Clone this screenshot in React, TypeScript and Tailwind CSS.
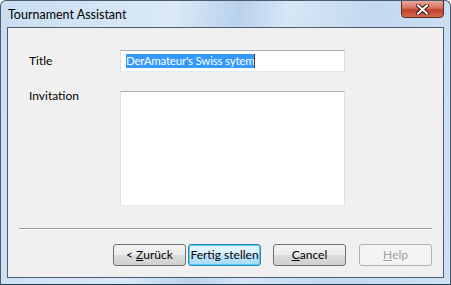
import { useState } from "react"

function VistaButton({
  children,
  isDefault = false,
  disabled = false,
  className = "",
}: {
  children: React.ReactNode
  isDefault?: boolean
  disabled?: boolean
  className?: string
}) {
  let look =
    "border-[#707070] text-black bg-[linear-gradient(to_bottom,#f2f2f2_0%,#ebebeb_48%,#dddddd_52%,#cfcfcf_100%)]"
  if (isDefault)
    look =
      "border-[#3c7fb1] text-black bg-[linear-gradient(to_bottom,#eaf6fd_0%,#d9f0fc_48%,#bee6fd_52%,#a7d9f5_100%)] shadow-[inset_0_0_0_1px_#48d3fc]"
  if (disabled) look = "border-[#adb2b5] text-[#a0a0a0] bg-[#f4f4f4]"
  return (
    <button
      disabled={disabled}
      className={`h-[22px] w-[73px] shrink-0 whitespace-nowrap rounded-[3px] border text-[12px] leading-none flex items-center justify-center ${look} ${className}`}
    >
      {children}
    </button>
  )
}

export default function App() {
  const [title] = useState("DerAmateur's Swiss sytem")

  return (
    <div
      className="w-[451px] h-[285px] overflow-hidden rounded-t-[6px] border border-[#4a5b6c] border-b-[#1c3b4d] bg-[linear-gradient(100deg,#c9def3_0%,#dbe9f7_35%,#b9d2ec_48%,#d6e6f6_58%,#c3d9f0_75%,#cfe1f4_100%)] flex flex-col"
      style={{ fontFamily: 'Lato, "Open Sans", sans-serif' }}
    >
      {/* title bar */}
      <div className="h-[26px] flex items-start justify-between pl-[7px] pr-[6px]">
        <span className="mt-[5px] text-[12.5px] text-black">Tournament Assistant</span>
        <div className="relative -mt-px w-[43px] h-[18px] rounded-b-[4px] border border-[#5a2a22] bg-[linear-gradient(to_bottom,#e9a99c_0%,#d7705e_45%,#c0412c_55%,#d36b4f_100%)] flex items-center justify-center">
          <svg width="13" height="11" viewBox="0 0 13 11">
            <path
              d="M2 1.5 L11 9.5 M11 1.5 L2 9.5"
              stroke="#3b1a14"
              strokeWidth="4"
              strokeLinecap="square"
            />
            <path
              d="M2 1.5 L11 9.5 M11 1.5 L2 9.5"
              stroke="#ffffff"
              strokeWidth="2"
              strokeLinecap="square"
            />
          </svg>
        </div>
      </div>

      {/* client area */}
      <div className="mx-[6px] mb-[6px] flex-1 border border-[#4d5c6b] bg-[#f0f0f0] flex flex-col text-[12px] text-black">
        <div className="grid grid-cols-[91px_225px] gap-y-[19px] pl-[21px] pt-[22px]">
          <span className="self-center">Title</span>
          <div className="h-[22px] border border-[#abadb3] border-x-[#dbdfe6] border-b-[#e3e9ef] bg-white flex items-center px-[5px]">
            <span className="bg-[#3399ff] text-white text-[11.5px] tracking-[-0.2px] leading-[14px]">{title}</span>
            <span className="w-px h-[14px] bg-[#5a3a2a]" />
          </div>
          <span className="-mt-[2px] leading-[14px]">Invitation</span>
          <div className="h-[115px] border border-[#adadad] border-x-[#dbdfe6] border-b-[#e3e9ef] bg-white" />
        </div>

        <div className="mt-auto mx-[11px] border-t border-[#a0a0a0] border-b border-b-white" />

        <div className="flex justify-end pr-[11px] pt-[14px] pb-[11px]">
          <VistaButton>
            &lt; <span className="underline ml-[3px]">Z</span>urück
          </VistaButton>
          <VistaButton isDefault className="ml-[2px]">
            Fertig stellen
          </VistaButton>
          <VistaButton className="ml-[12px]">
            <span className="underline">C</span>ancel
          </VistaButton>
          <VistaButton disabled className="ml-[13px]">
            <span className="underline">H</span>elp
          </VistaButton>
        </div>
      </div>
    </div>
  )
}
